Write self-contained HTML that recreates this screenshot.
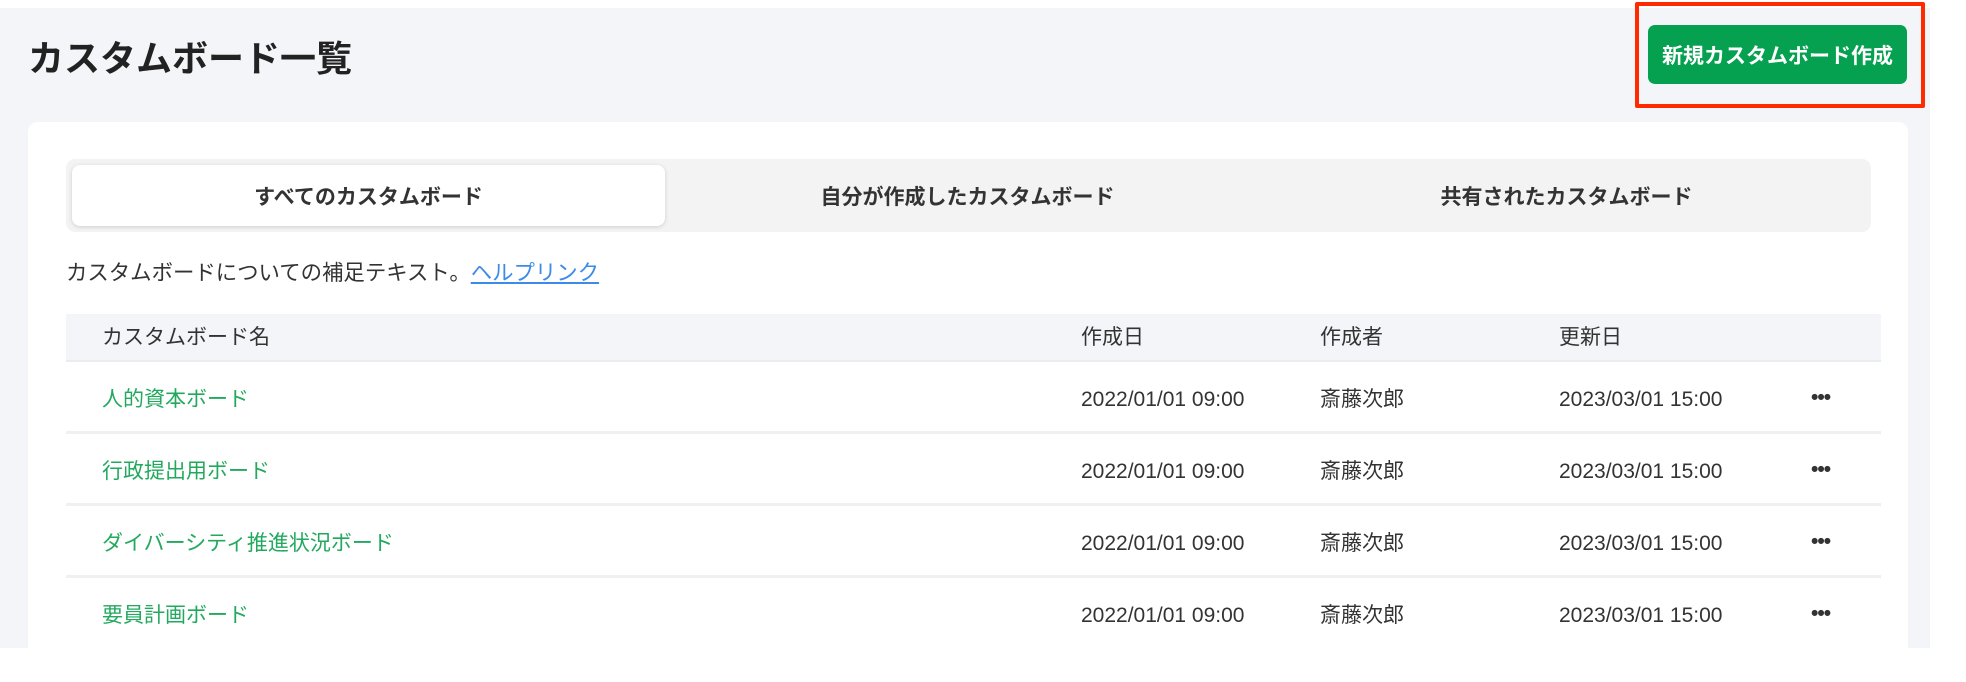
<!DOCTYPE html>
<html><head><meta charset="utf-8"><style>
*{margin:0;padding:0;box-sizing:border-box}
body{width:1966px;height:640px;overflow:hidden;background:#fff;font-family:"Liberation Sans","Noto Sans CJK JP",sans-serif;color:#333;position:relative}
.bg{position:absolute;left:0;top:8px;width:1930px;height:640px;background:#f4f5f8}
.title{position:absolute;left:28px;top:36px;font-size:36px;font-weight:bold;color:#222;line-height:46px}
.red{position:absolute;left:1635px;top:2px;width:290px;height:106px;border:4px solid #ff2a00;border-radius:2px}
.btn{position:absolute;left:1648px;top:25px;width:259px;height:59px;background:#05a050;border-radius:7px;color:#fff;font-weight:bold;font-size:21px;display:flex;align-items:center;justify-content:center}
.card{position:absolute;left:28px;top:122px;width:1880px;height:560px;background:#fff;border-radius:10px}
.tabs{position:absolute;left:66px;top:159px;width:1805px;height:73px;background:#f3f3f3;border-radius:9px}
.tab{position:absolute;top:6px;height:61px;width:593px;display:flex;align-items:center;justify-content:center;font-weight:bold;font-size:21px;color:#333}
.tab.a{background:#fff;border-radius:8px;box-shadow:0 1px 4px rgba(0,0,0,.15)}
.help{position:absolute;left:66px;top:258px;font-size:21.4px;color:#333;line-height:30px}
.help a{color:#3d8be8;text-decoration:underline}
.thead{position:absolute;left:66px;top:314px;width:1815px;height:48px;background:#f4f5f8;border-bottom:2px solid #ececef}
.c{position:absolute;font-size:21px;white-space:nowrap;line-height:30px}
.row{position:absolute;left:66px;width:1815px;height:72px;border-bottom:3px solid #f0f0f2}
.g{color:#22a95e}
.dots{font-weight:bold;font-size:21px;letter-spacing:-1px}
</style></head><body>
<div class="bg"></div>
<div class="title">カスタムボード一覧</div>
<div class="red"></div>
<div class="btn">新規カスタムボード作成</div>
<div class="card"></div>
<div class="tabs">
<div class="tab a" style="left:6px">すべてのカスタムボード</div>
<div class="tab" style="left:605px">自分が作成したカスタムボード</div>
<div class="tab" style="left:1204px">共有されたカスタムボード</div>
</div>
<div class="help">カスタムボードについての補足テキスト。<a>ヘルプリンク</a></div>
<div class="thead">
<div class="c" style="left:36px;top:9px">カスタムボード名</div>
<div class="c" style="left:1015px;top:9px">作成日</div>
<div class="c" style="left:1254px;top:9px">作成者</div>
<div class="c" style="left:1493px;top:9px">更新日</div>
</div>
<div class="row" style="top:362px"><div class="c g" style="left:36px;top:23px">人的資本ボード</div><div class="c" style="left:1015px;top:23px">2022/01/01 09:00</div><div class="c" style="left:1254px;top:23px">斎藤次郎</div><div class="c" style="left:1493px;top:23px">2023/03/01 15:00</div><div class="c dots" style="left:1745px;top:21px">•••</div></div>
<div class="row" style="top:434px"><div class="c g" style="left:36px;top:23px">行政提出用ボード</div><div class="c" style="left:1015px;top:23px">2022/01/01 09:00</div><div class="c" style="left:1254px;top:23px">斎藤次郎</div><div class="c" style="left:1493px;top:23px">2023/03/01 15:00</div><div class="c dots" style="left:1745px;top:21px">•••</div></div>
<div class="row" style="top:506px"><div class="c g" style="left:36px;top:23px">ダイバーシティ推進状況ボード</div><div class="c" style="left:1015px;top:23px">2022/01/01 09:00</div><div class="c" style="left:1254px;top:23px">斎藤次郎</div><div class="c" style="left:1493px;top:23px">2023/03/01 15:00</div><div class="c dots" style="left:1745px;top:21px">•••</div></div>
<div class="row" style="top:578px;border:none"><div class="c g" style="left:36px;top:23px">要員計画ボード</div><div class="c" style="left:1015px;top:23px">2022/01/01 09:00</div><div class="c" style="left:1254px;top:23px">斎藤次郎</div><div class="c" style="left:1493px;top:23px">2023/03/01 15:00</div><div class="c dots" style="left:1745px;top:21px">•••</div></div>
</body></html>
